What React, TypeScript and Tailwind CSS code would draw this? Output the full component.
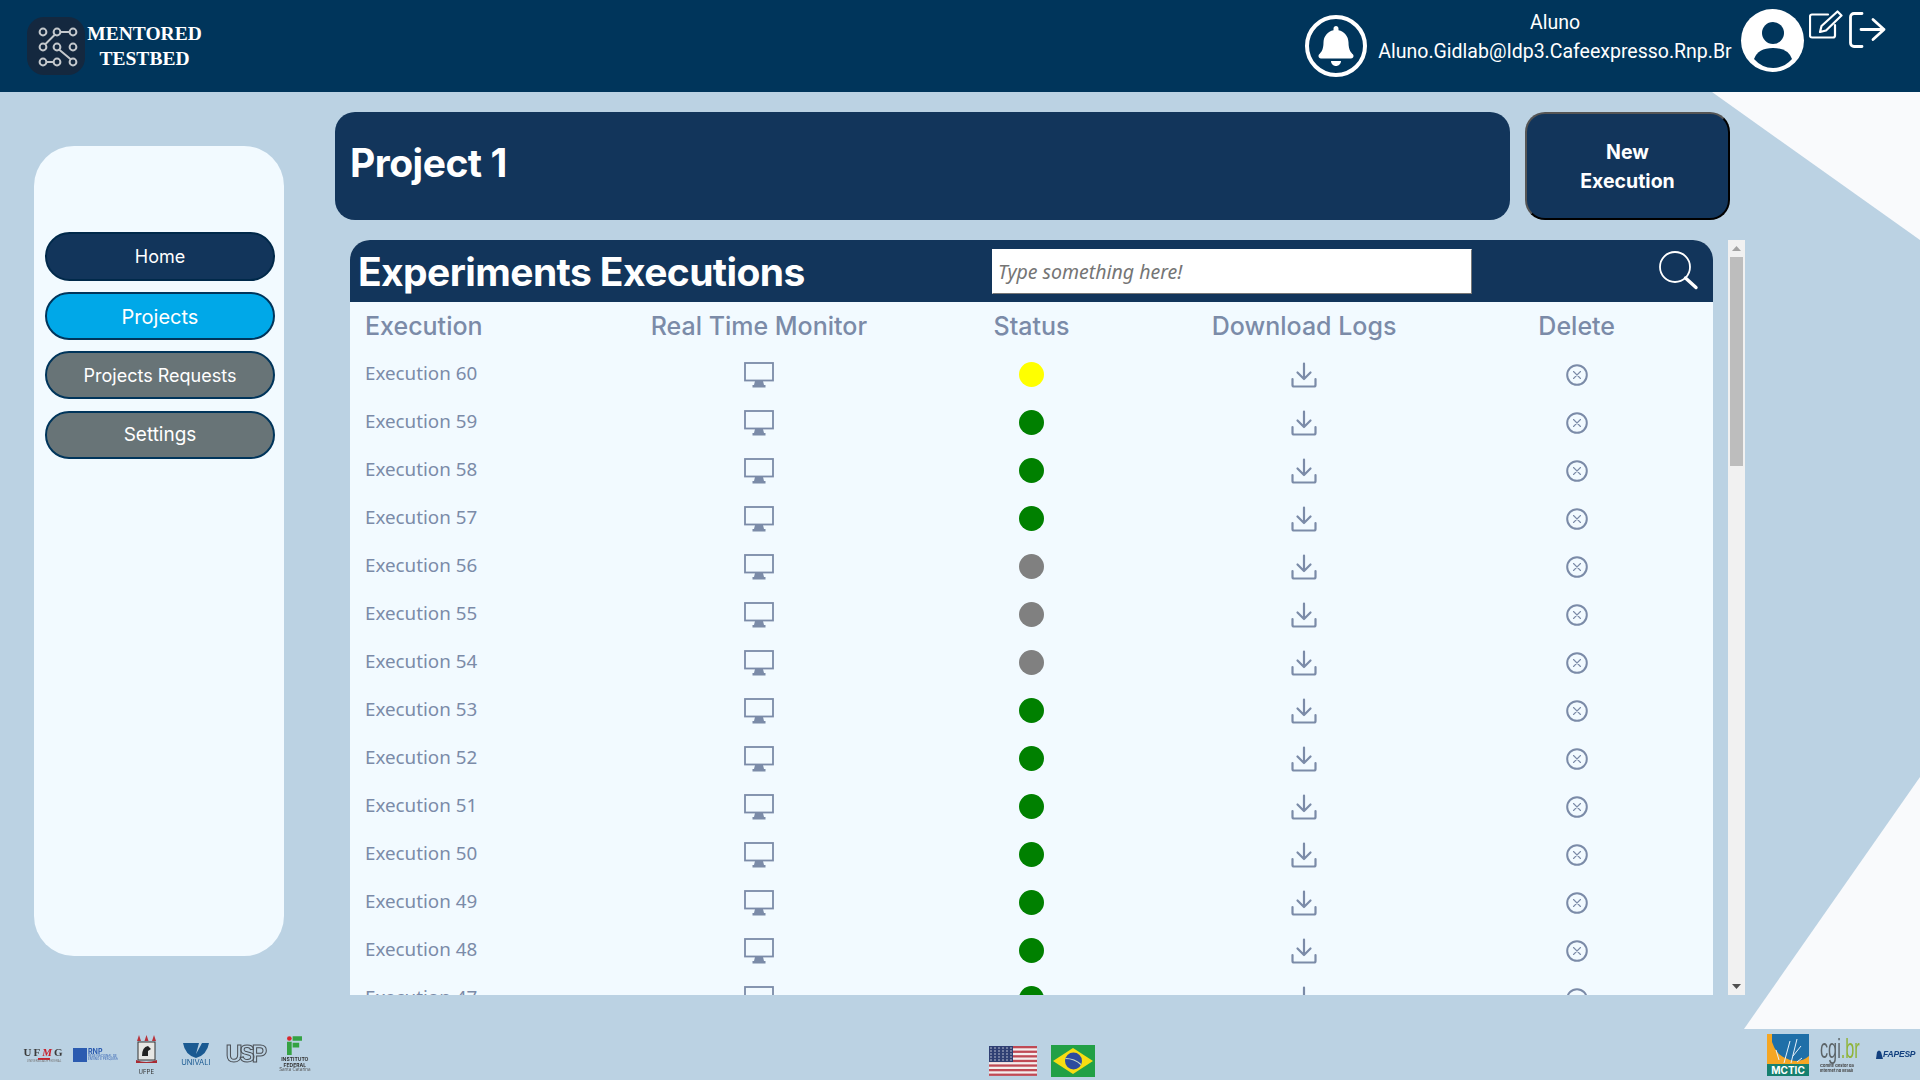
import { FaBell } from "react-icons/fa";

const rows: { n: number; s: string }[] = [
  { n: 60, s: "bg-[#ffff00]" },
  { n: 59, s: "bg-[#008000]" },
  { n: 58, s: "bg-[#008000]" },
  { n: 57, s: "bg-[#008000]" },
  { n: 56, s: "bg-[#808080]" },
  { n: 55, s: "bg-[#808080]" },
  { n: 54, s: "bg-[#808080]" },
  { n: 53, s: "bg-[#008000]" },
  { n: 52, s: "bg-[#008000]" },
  { n: 51, s: "bg-[#008000]" },
  { n: 50, s: "bg-[#008000]" },
  { n: 49, s: "bg-[#008000]" },
  { n: 48, s: "bg-[#008000]" },
  { n: 47, s: "bg-[#008000]" },
];

function MonitorIcon() {
  return (
    <svg className="mt-[1px]" width="30" height="26" viewBox="0 0 30 26">
      <rect x="1" y="1" width="28" height="17.5" fill="none" stroke="#7b8ba8" strokeWidth="1.8" />
      <path d="M11 19h8l1 4h-10z M8.500 23h13v2.500h-13z" fill="#7b8ba8" />
    </svg>
  );
}

function DownloadIcon() {
  return (
    <svg className="mt-[1px]" width="26" height="26" viewBox="0 0 26 26" fill="none" stroke="#7b8ba8" strokeWidth="2.200" strokeLinecap="round" strokeLinejoin="round">
      <path d="M13 1.500v15M6.500 10.500l6.500 6.500 6.500-6.500" />
      <path d="M1.500 17v6a1.500 1.500 0 0 0 1.500 1.500h20a1.500 1.500 0 0 0 1.500-1.500v-6" />
    </svg>
  );
}

function DeleteIcon() {
  return (
    <svg className="mt-[1px]" width="22" height="22" viewBox="0 0 22 22" fill="none" stroke="#7b8ba8" strokeLinecap="round">
      <circle cx="11" cy="11" r="9.800" strokeWidth="2" />
      <path d="M7.500 7.500l7 7M14.500 7.500l-7 7" strokeWidth="1.100" />
    </svg>
  );
}

function SearchIcon() {
  return (
    <svg width="40" height="40" viewBox="0 0 40 40" fill="none" stroke="#fff" strokeLinecap="round">
      <circle cx="16" cy="16" r="15" strokeWidth="1.800" />
      <path d="M26.500 27l10.500 9.500" strokeWidth="3.400" />
    </svg>
  );
}

function BrandLogo() {
  const nodes = [
    [16, 15], [30, 15], [46, 15],
    [16, 30], [30, 30], [46, 30],
    [16, 45], [30, 45], [46, 45],
  ];
  return (
    <div className="w-[58px] h-[58px] rounded-[17px] bg-[#14283f] shrink-0">
      <svg width="58" height="58" viewBox="0 0 58 58" fill="none" stroke="#c4c8cc" strokeWidth="2">
        <path d="M33 15h10 M18 27.500l10-10 M32 32.500l12 10 M19 45h8" />
        {nodes.map(([x, y]) => (
          <circle key={`${x}-${y}`} cx={x} cy={y} r="3.400" fill="#14283f" />
        ))}
      </svg>
    </div>
  );
}

function UsFlag() {
  return (
    <svg width="48" height="30" viewBox="0 0 48 30">
      <rect width="48" height="30" fill="#f4eeee" />
      {[0, 4.600, 9.200, 13.800, 18.400, 23, 27.600].map((y) => (
        <rect key={y} y={y} width="48" height="2.300" fill="#bf4a55" />
      ))}
      <rect width="24" height="16" fill="#2f3f73" />
      {[2, 5, 8, 11, 14].map((y) =>
        [2, 6, 10, 14, 18, 22].map((x) => <circle key={`${x}-${y}`} cx={x} cy={y} r="0.700" fill="#e6e9f2" />),
      )}
    </svg>
  );
}

function BrFlag() {
  return (
    <svg width="44" height="32" viewBox="0 0 44 32">
      <rect width="44" height="32" fill="#22a046" />
      <path d="M22 3L42 16L22 29L2 16z" fill="#f7dd12" />
      <circle cx="22.500" cy="16" r="8.500" fill="#2d4c9e" />
      <path d="M14.500 13.500q9 0 15.500 6" fill="none" stroke="#c9dcc9" strokeWidth="1.200" />
    </svg>
  );
}

function McticLogo() {
  return (
    <svg width="42" height="42" viewBox="0 0 42 42">
      <rect width="42" height="32" fill="#f5a623" />
      <path d="M5 0h37v22q-8 7-19 4Q9 22 5 8z" fill="#1f6fa8" />
      <path d="M12 26l-3-10M17 29l6-22M24 29l6-24M30 28l5-4M26 22l8-10" fill="none" stroke="#e8f2fa" strokeWidth="1" />
      <rect y="30" width="42" height="12" fill="#16806f" />
      <text x="21" y="40" fontSize="10" fontWeight="700" fill="#fff" textAnchor="middle" fontFamily="Inter, sans-serif">MCTIC</text>
    </svg>
  );
}

function LeftLogos() {
  return (
    <div className="flex items-center w-[989px] pl-[23px] blur-[0.4px]">
      <div className="w-[42px] flex flex-col items-center leading-none">
        <span className="font-['Liberation_Serif',serif] text-[11px] font-bold tracking-[2px] text-[#3b3b3b]">
          UF<span className="italic text-[#c8202c]">M</span>G
        </span>
        <span className="w-[12px] h-[2px] bg-[#c8202c]" />
        <span className="text-[3px] text-[#777] whitespace-nowrap">UNIVERSIDADE FEDERAL</span>
      </div>
      <div className="ml-[8px] flex items-center gap-[1px]">
        <span className="w-[14px] h-[14px] bg-[#2b5bb0]" />
        <div className="flex flex-col leading-none font-['Inter',sans-serif]">
          <span className="text-[7px] font-bold text-[#2b5bb0]">RNP</span>
          <span className="text-[3px] text-[#2b5bb0] whitespace-nowrap">REDE NACIONAL DE</span>
          <span className="text-[3px] text-[#2b5bb0] whitespace-nowrap">ENSINO E PESQUISA</span>
        </div>
      </div>
      <div className="ml-[17px] w-[23px] flex flex-col items-center">
        <svg width="23" height="33" viewBox="0 0 23 33">
          <path d="M4 0l2 6H2zM11.500 0l2 6h-4zM19 0l2 6h-4z" fill="#b8323a" />
          <rect x="3" y="7" width="17" height="18" fill="#e7e7e4" stroke="#333" strokeWidth="1" />
          <path d="M7 21q0-9 6-10l3 3-3 2v5z" fill="#222" />
          <path d="M1 25q10 4 21 0v3H1z" fill="#a82a32" />
        </svg>
        <span className="text-[6px] leading-none mt-[1px] text-[#333] font-['Inter',sans-serif]">UFPE</span>
      </div>
      <div className="ml-[22px] w-[32px] flex flex-col items-center">
        <svg width="28" height="15" viewBox="0 0 28 15">
          <path d="M1 0h26q-2 12-13 15Q3 12 1 0z" fill="#1a5a92" />
          <path d="M17 0h3l-6 11z" fill="#bbd2e3" />
        </svg>
        <span className="text-[7.500px] leading-none mt-[1px] text-[#1a5a92] font-['Inter',sans-serif]">UNIVALI</span>
      </div>
      <span className="ml-[14px] w-[40px] text-[23px] leading-none font-bold tracking-[-3px] text-[#bbd2e3] [-webkit-text-stroke:1px_#4a4f55] font-['Liberation_Sans',sans-serif]">
        USP
      </span>
      <div className="ml-[13px] w-[32px] flex flex-col items-center">
        <svg width="15" height="19" viewBox="0 0 16 20">
          <circle cx="2.500" cy="2.500" r="2.500" fill="#d8262c" />
          <path d="M6 0h10v5H6zM0 6h5v14H0zM6 7h7v5H6z" fill="#35a243" />
        </svg>
        <span className="text-[5px] font-bold leading-[6px] mt-[1px] text-[#333] text-center font-['Inter',sans-serif]">
          INSTITUTO FEDERAL
        </span>
        <span className="text-[4.500px] leading-none text-[#555] font-['Inter',sans-serif] whitespace-nowrap">Santa Catarina</span>
      </div>
    </div>
  );
}

function RightLogos() {
  return (
    <div className="flex items-center blur-[0.3px]">
      <McticLogo />
      <div className="ml-[11px] w-[42px] shrink-0 flex flex-col leading-none">
        <span className="block origin-left scale-x-[0.58] font-['Liberation_Sans',sans-serif] text-[28px] leading-[25px] whitespace-nowrap text-[#5c6468]">
          cgi<span className="text-[#8fb43a]">.br</span>
        </span>
        <span className="text-[4px] font-bold text-[#444] font-['Inter',sans-serif] leading-[5px] mt-[2px]">
          Comitê Gestor da Internet no Brasil
        </span>
      </div>
      <div className="ml-[13px] flex items-center">
        <svg width="8" height="9" viewBox="0 0 8 9">
          <path d="M1 9l1-7q2-3 4 0l2 7z" fill="#12407f" />
        </svg>
        <span className="text-[8.500px] font-bold italic tracking-[-0.2px] text-[#12407f] font-['Liberation_Sans',sans-serif]">FAPESP</span>
      </div>
    </div>
  );
}

export default function App() {
  return (
    <div className="relative h-screen w-full overflow-hidden bg-[#bbd2e3] flex flex-col">
      <div className="absolute top-[92px] right-0 w-[208px] h-[148px] bg-[#f9fafc] [clip-path:polygon(0_0,100%_0,100%_100%)]" />
      <div className="absolute top-[777px] right-0 w-[176px] h-[252px] bg-[#f9fafc] [clip-path:polygon(100%_0,100%_100%,0_100%)]" />

      <header className="relative h-[92px] bg-[#00355b] flex items-center shrink-0">
        <div className="ml-[27px] flex items-center">
          <BrandLogo />
          <div className="w-[119px] pb-[1px] text-center font-['Liberation_Serif',serif] font-bold text-[19.500px] leading-[25px] text-white">
            <div>MENTORED</div>
            <div>TESTBED</div>
          </div>
        </div>
        <div className="ml-auto flex items-start h-full">
          <div className="mt-[15px] w-[62px] h-[62px] rounded-full border-[4px] border-white flex items-center justify-center text-white">
            <FaBell size={40} />
          </div>
          <div className="ml-[11px] w-[354px] mt-[8px] text-center font-['Roboto',sans-serif] text-[19.500px] leading-[29px] text-white whitespace-nowrap">
            <div>Aluno</div>
            <div>Aluno.Gidlab@Idp3.Cafeexpresso.Rnp.Br</div>
          </div>
          <div className="ml-[9px] mt-[9px] w-[63px] h-[63px] rounded-full bg-white overflow-hidden">
            <svg width="63" height="63" viewBox="0 0 63 63">
              <circle cx="32" cy="24" r="11" fill="#00355b" />
              <path d="M13 50q4-11 19-11t19 11q-8 9-19 9T13 50z" fill="#00355b" />
            </svg>
          </div>
          <svg className="ml-[5px] mt-[10px]" width="34" height="29" viewBox="0 0 34 29" fill="none" stroke="#fff" strokeWidth="2.200" strokeLinecap="round" strokeLinejoin="round">
            <path d="M19 4.500H3a2 2 0 0 0-2 2v19a2 2 0 0 0 2 2h21a2 2 0 0 0 2-2V15" />
            <path d="M28.500 1.500l4 4L17 20.500l-6 1.500 1.500-6z" />
          </svg>
          <svg className="ml-[6px] mt-[12px]" width="37" height="36" viewBox="0 0 37 36" fill="none" stroke="#fff" strokeWidth="2.800" strokeLinecap="round" strokeLinejoin="round">
            <path d="M13 1.500H5a3.500 3.500 0 0 0-3.500 3.500v26a3.500 3.500 0 0 0 3.500 3.500h8" />
            <path d="M12 17.500h23M24 7.500l11 10-11 10" />
          </svg>
          <div className="w-[34px]" />
        </div>
      </header>

      <main className="relative flex flex-1 min-h-0">
        <aside className="ml-[34px] mt-[54px] w-[250px] h-[810px] rounded-[40px] bg-[#f2faff] pt-[86px] pl-[11px] pr-[9px] flex flex-col shrink-0 font-['Inter',sans-serif] text-[18px] text-white">
          <div className="h-[49px] rounded-full bg-[#12355b] border-2 border-[#00294a] flex items-center justify-center">Home</div>
          <div className="mt-[11px] h-[48px] rounded-full bg-[#00a8e8] border-2 border-[#00355b] flex items-center justify-center text-[20px] pt-[1px]">Projects</div>
          <div className="mt-[11px] h-[48px] rounded-full bg-[#687477] border-2 border-[#00355b] flex items-center justify-center">Projects Requests</div>
          <div className="mt-[12px] h-[48px] rounded-full bg-[#687477] border-2 border-[#00355b] flex items-center justify-center text-[19px] pt-[1px]">Settings</div>
        </aside>

        <section className="ml-[51px] mt-[20px] flex flex-col font-['Inter',sans-serif]">
          <div className="flex gap-[15px]">
            <div className="w-[1175px] h-[108px] rounded-[20px] bg-[#12355b] flex items-center pl-[15px] pb-[6px] text-[39px] font-bold tracking-[-0.5px] text-white">
              Project 1
            </div>
            <div className="w-[205px] h-[108px] rounded-[20px] bg-[#12355b] border-2 border-[#000] border-t-[#555] border-l-[#555] flex items-center justify-center pt-[2px] text-center text-[19.500px] leading-[29px] font-bold text-white">
              New
              <br />
              Execution
            </div>
          </div>

          <div className="ml-[15px] mt-[20px] flex gap-[15px] h-[755px]">
            <div className="w-[1363px] h-full rounded-t-[20px] bg-[#f2faff] overflow-hidden">
              <div className="h-[62px] bg-[#12355b] flex items-center pl-[8px] text-white">
                <span className="w-[634px] pt-[2px] text-[39px] font-bold tracking-[-0.600px]">Experiments Executions</span>
                <input
                  className="w-[480px] h-[45px] bg-white px-[5px] text-[19.500px] italic outline-none border border-[#767676] border-t-white border-l-white placeholder:text-[#757575] font-['Noto_Sans',sans-serif]"
                  placeholder="Type something here!"
                />
                <div className="ml-[187px]">
                  <SearchIcon />
                </div>
              </div>
              <div className="grid grid-cols-5 h-[48px] pt-[2px] items-center text-[25px] font-medium text-[#7b8ba8] text-center">
                <div className="text-left pl-[15px]">Execution</div>
                <div>Real Time Monitor</div>
                <div>Status</div>
                <div>Download Logs</div>
                <div>Delete</div>
              </div>
              {rows.map((r) => (
                <div key={r.n} className="grid grid-cols-5 h-[48px] items-center justify-items-center text-[18.800px] text-[#7b8ba8] font-['Noto_Sans',sans-serif]">
                  <div className="justify-self-start pl-[15px] pb-[2px]">Execution {r.n}</div>
                  <MonitorIcon />
                  <span className={`w-[25px] h-[25px] rounded-full ${r.s}`} />
                  <DownloadIcon />
                  <DeleteIcon />
                </div>
              ))}
            </div>

            <div className="w-[17px] h-full bg-[#f1f1f1] flex flex-col items-center">
              <svg className="mt-[6px]" width="9" height="5" viewBox="0 0 9 5">
                <path d="M4.500 0L9 5H0z" fill="#a3a3a3" />
              </svg>
              <div className="mt-[6px] w-[13px] h-[209px] bg-[#bdbdbd]" />
              <svg className="mt-auto mb-[6px]" width="9" height="5" viewBox="0 0 9 5">
                <path d="M0 0h9L4.500 5z" fill="#505050" />
              </svg>
            </div>
          </div>
        </section>
      </main>

      <footer className="relative h-[51px] flex items-center shrink-0">
        <LeftLogos />
        <div className="flex items-center w-[778px] pt-[12px]">
          <UsFlag />
          <div className="ml-[14px]">
            <BrFlag />
          </div>
        </div>
        <RightLogos />
      </footer>
    </div>
  );
}
